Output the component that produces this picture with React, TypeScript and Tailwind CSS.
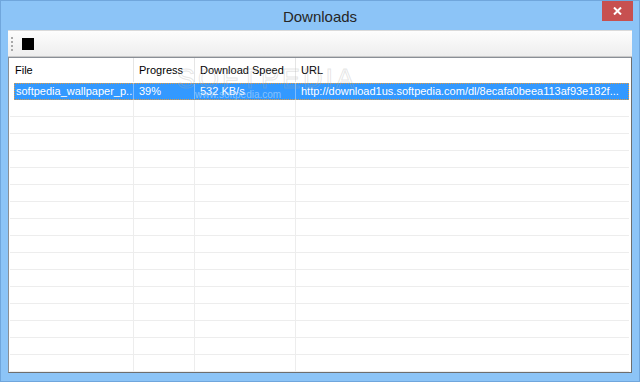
import React from 'react';

const cols = [
  { w: 'w-[125px]', pl: 'pl-[6px]' },
  { w: 'w-[61px]', pl: 'pl-[5px]' },
  { w: 'w-[101px]', pl: 'pl-[5px]' },
  { w: 'flex-1', pl: 'pl-[5px]' },
];

const headers = ['File', 'Progress', 'Download Speed', 'URL'];
const selected = [
  'softpedia_wallpaper_p...',
  '39%',
  '532 KB/s',
  'http://download1us.softpedia.com/dl/8ecafa0beea113af93e182f...',
];

const EmptyRow: React.FC = () => (
  <div className="flex shrink-0 h-[17px] border-b border-[#ededed] ml-[1px] mr-[2px]">
    <div className="w-[124px] border-r border-[#ededed]" />
    <div className="w-[61px] border-r border-[#ededed]" />
    <div className="w-[101px] border-r border-[#ededed]" />
    <div className="flex-1" />
  </div>
);

export default function App() {
  return (
    <div
      className="w-[640px] h-[382px] bg-[#8cc4f7] border border-[#70a6dc] flex flex-col overflow-hidden"
      style={{ fontFamily: '"Liberation Sans", Arial, sans-serif' }}
    >
      {/* title bar */}
      <div className="h-[29px] shrink-0 flex items-start relative">
        <div className="flex-1 text-center text-[15px] text-[#262626] pt-[5px]">Downloads</div>
        <div className="absolute top-[-1px] right-[6px] w-[31px] h-[21px] bg-[#c75050] flex items-center justify-center">
          <svg width="9" height="8" viewBox="0 0 9 8">
            <path d="M1 0.5 L8 7.5 M8 0.5 L1 7.5" stroke="#fff" strokeWidth="2" />
          </svg>
        </div>
      </div>

      <div className="h-[343px] shrink-0 flex flex-col mx-[7px] overflow-hidden">
        {/* toolbar */}
        <div className="h-[27px] shrink-0 flex items-center bg-gradient-to-b from-[#fdfdfd] to-[#eeeeee] border-t border-[#dadada] border-b border-b-[#c9c9c9]">
          <div className="ml-[3px] flex flex-col gap-[2px]">
            <div className="w-[2px] h-[2px] bg-[#a9a9a9]" />
            <div className="w-[2px] h-[2px] bg-[#a9a9a9]" />
            <div className="w-[2px] h-[2px] bg-[#a9a9a9]" />
            <div className="w-[2px] h-[2px] bg-[#a9a9a9]" />
          </div>
          <div className="ml-[9px] w-[12px] h-[12px] bg-black" />
        </div>

        {/* list view */}
        <div className="h-[316px] shrink-0 flex flex-col bg-white border border-[#8a8f96] border-r-[#6e6e6e] border-b-[#6e6e6e] relative overflow-hidden text-[11px]">
          <div className="flex shrink-0 h-[24px] items-center text-black">
            {headers.map((h, i) => (
              <div
                key={h}
                className={`${cols[i].w} ${cols[i].pl} h-full flex items-center ${i < 3 ? 'border-r border-[#e5e5e5]' : ''}`}
              >
                {h}
              </div>
            ))}
          </div>

          <div className="flex shrink-0 h-[17px] mt-[1px] ml-[5px] mr-[2px] bg-[#3399ff] text-white outline outline-1 outline-dotted outline-[#e59a3c] -outline-offset-1">
            <div className="w-[120px] pl-[2px] border-r border-[#7dbcff] whitespace-nowrap overflow-hidden leading-[17px]">{selected[0]}</div>
            <div className="w-[61px] pl-[5px] border-r border-[#7dbcff] leading-[17px]">{selected[1]}</div>
            <div className="w-[101px] pl-[5px] border-r border-[#7dbcff] leading-[17px]">{selected[2]}</div>
            <div className="flex-1 pl-[5px] leading-[17px] whitespace-nowrap overflow-hidden">{selected[3]}</div>
          </div>

          {Array.from({ length: 16 }).map((_, i) => (
            <EmptyRow key={i} />
          ))}

          {/* softpedia watermark */}
          <div className="absolute left-[168px] top-[1px] text-[27px] tracking-[3px] text-transparent pointer-events-none" style={{ WebkitTextStroke: '1px rgba(170,170,170,0.3)' }}>
            SOFTPEDIA
          </div>
          <div className="absolute left-[186px] top-[29px] text-[10px] text-[#d4e8fb] opacity-50 pointer-events-none">
            www.softpedia.com
          </div>
        </div>
      </div>
    </div>
  );
}
